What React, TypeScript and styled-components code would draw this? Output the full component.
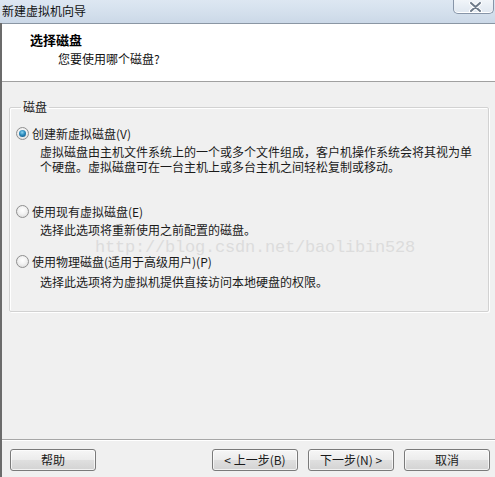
import React from "react";
import styled, { createGlobalStyle } from "styled-components";

const Global = createGlobalStyle`
  html, body { margin: 0; padding: 0; }
  body {
    width: 495px;
    height: 477px;
    overflow: hidden;
    background: #f0f0f0;
    font-family: "Noto Sans CJK SC", "Noto Sans", sans-serif;
    font-size: 12px;
    color: #1a1a1a;
  }
`;

const Window = styled.div`
  width: 495px;
  height: 477px;
  display: flex;
  flex-direction: column;
  box-sizing: border-box;
`;

const TitleBar = styled.div`
  height: 23px;
  flex: none;
  display: flex;
  justify-content: space-between;
  align-items: flex-start;
  background: linear-gradient(180deg, #dde7f2 0%, #d3dfec 60%, #cbd8e7 100%);
`;

const TitleText = styled.div`
  padding: 3px 0 0 2px;
  line-height: 16px;
  font-size: 12px;
  color: #111;
`;

const CloseButton = styled.div`
  width: 41px;
  height: 14px;
  margin-right: 1px;
  box-sizing: border-box;
  border: 1px solid #8795a8;
  border-top: none;
  border-radius: 0 0 5px 5px;
  background: linear-gradient(180deg, #f1f5f9 0%, #dfe7f0 100%);
  box-shadow: inset 0 -1px 0 #ffffff;
  display: flex;
  align-items: center;
  justify-content: center;
  padding-left: 4px;
`;

const Frame = styled.div`
  flex: 1;
  display: flex;
  flex-direction: column;
  border-left: 2px solid #6b6b6b;
  min-height: 0;
`;

const Header = styled.div`
  height: 59px;
  box-sizing: border-box;
  flex: none;
  background: #ffffff;
  border-top: 1px solid #8a96a3;
  border-bottom: 1px solid #a0a0a0;
  padding: 8px 0 0 28px;
`;

const HeaderTitle = styled.div`
  font-size: 13px;
  font-weight: 700;
  line-height: 16px;
  color: #000;
`;

const HeaderSub = styled.div`
  margin: 3px 0 0 28px;
  line-height: 16px;
  color: #111;
`;

const Main = styled.div`
  flex: 1;
  position: relative;
  padding: 18px 6px 0 7px;
`;

const Group = styled.fieldset`
  margin: 0;
  padding: 12px 0 22px 6px;
  border: 1px solid #d2d2d2;
  border-radius: 2px;
  box-shadow: inset 1px 1px 0 #ffffff, 1px 1px 0 #ffffff;
  min-width: 0;
`;

const Legend = styled.legend`
  margin-left: 5px;
  padding: 0 2px;
  line-height: 14px;
  color: #1a1a1a;
`;

const Option = styled.div<{ $top: number }>`
  margin-top: ${(p) => p.$top}px;
  display: flex;
  flex-direction: column;
`;

const OptionRow = styled.label`
  display: flex;
  align-items: center;
  gap: 3px;
  line-height: 15px;
`;

const Radio = styled.span<{ $checked?: boolean }>`
  width: 13px;
  height: 13px;
  box-sizing: border-box;
  border-radius: 50%;
  border: 1px solid #8f8f8f;
  background: radial-gradient(circle at 50% 40%, #ffffff 0%, #f2f2f2 45%, #d4d4d4 100%);
  display: flex;
  align-items: center;
  justify-content: center;
  flex: none;
  &::after {
    content: "";
    display: ${(p) => (p.$checked ? "block" : "none")};
    width: 7px;
    height: 7px;
    border-radius: 50%;
    background: radial-gradient(circle at 45% 35%, #8cd4f2 0%, #2b8bbd 45%, #0d4a78 100%);
  }
`;

const Desc = styled.div<{ $gap: number }>`
  margin: ${(p) => p.$gap}px 0 0 24px;
  line-height: 15px;
  color: #1a1a1a;
`;

const Watermark = styled.div`
  position: absolute;
  left: 93px;
  top: 159px;
  font-family: "Liberation Mono", "DejaVu Sans Mono", monospace;
  font-size: 17px;
  letter-spacing: -0.2px;
  line-height: 14px;
  color: #dcdcdc;
  pointer-events: none;
  white-space: nowrap;
`;

const Footer = styled.div`
  flex: none;
  border-top: 1px solid #a7a7a7;
  box-shadow: inset 0 1px 0 #ffffff;
  padding: 9px 5px 6px 8px;
  display: flex;
  justify-content: space-between;
`;

const ButtonGroup = styled.div`
  display: flex;
  gap: 10px;
`;

const Button = styled.button`
  width: 86px;
  height: 22px;
  box-sizing: border-box;
  border: 1px solid #7a7a7a;
  border-radius: 3px;
  background: linear-gradient(180deg, #f6f6f6 0%, #ececec 48%, #dfdfdf 52%, #d3d3d3 100%);
  box-shadow: inset 0 0 0 1px rgba(255, 255, 255, 0.7);
  font-family: "Noto Sans CJK SC", "Noto Sans", sans-serif;
  font-size: 12px;
  line-height: 14px;
  color: #1a1a1a;
  padding: 0;
  display: flex;
  align-items: center;
  justify-content: center;
  white-space: pre;
`;

const CloseIcon = () => (
  <svg width="13" height="10" viewBox="0 0 13 10">
    <path d="M2 1 L11 9 M11 1 L2 9" stroke="#ffffff" strokeWidth="4" strokeLinecap="round" />
    <path d="M2 1 L11 9 M11 1 L2 9" stroke="#6d7a89" strokeWidth="2" strokeLinecap="round" />
  </svg>
);

export default function App() {
  return (
    <>
      <Global />
      <Window>
        <TitleBar>
          <TitleText>新建虚拟机向导</TitleText>
          <CloseButton>
            <CloseIcon />
          </CloseButton>
        </TitleBar>
        <Frame>
          <Header>
            <HeaderTitle>选择磁盘</HeaderTitle>
            <HeaderSub>您要使用哪个磁盘?</HeaderSub>
          </Header>
          <Main>
            <Group>
              <Legend>磁盘</Legend>
              <Option $top={0}>
                <OptionRow>
                  <Radio $checked />
                  创建新虚拟磁盘(V)
                </OptionRow>
                <Desc $gap={3}>
                  虚拟磁盘由主机文件系统上的一个或多个文件组成，客户机操作系统会将其视为单
                  <br />
                  个硬盘。虚拟磁盘可在一台主机上或多台主机之间轻松复制或移动。
                </Desc>
              </Option>
              <Option $top={30}>
                <OptionRow>
                  <Radio />
                  使用现有虚拟磁盘(E)
                </OptionRow>
                <Desc $gap={3}>选择此选项将重新使用之前配置的磁盘。</Desc>
              </Option>
              <Option $top={17}>
                <OptionRow>
                  <Radio />
                  使用物理磁盘(适用于高级用户)(P)
                </OptionRow>
                <Desc $gap={5}>选择此选项将为虚拟机提供直接访问本地硬盘的权限。</Desc>
              </Option>
            </Group>
            <Watermark>http://blog.csdn.net/baolibin528</Watermark>
          </Main>
          <Footer>
            <Button>帮助</Button>
            <ButtonGroup>
              <Button>{"< 上一步(B)"}</Button>
              <Button>{"下一步(N) >"}</Button>
              <Button>取消</Button>
            </ButtonGroup>
          </Footer>
        </Frame>
      </Window>
    </>
  );
}
